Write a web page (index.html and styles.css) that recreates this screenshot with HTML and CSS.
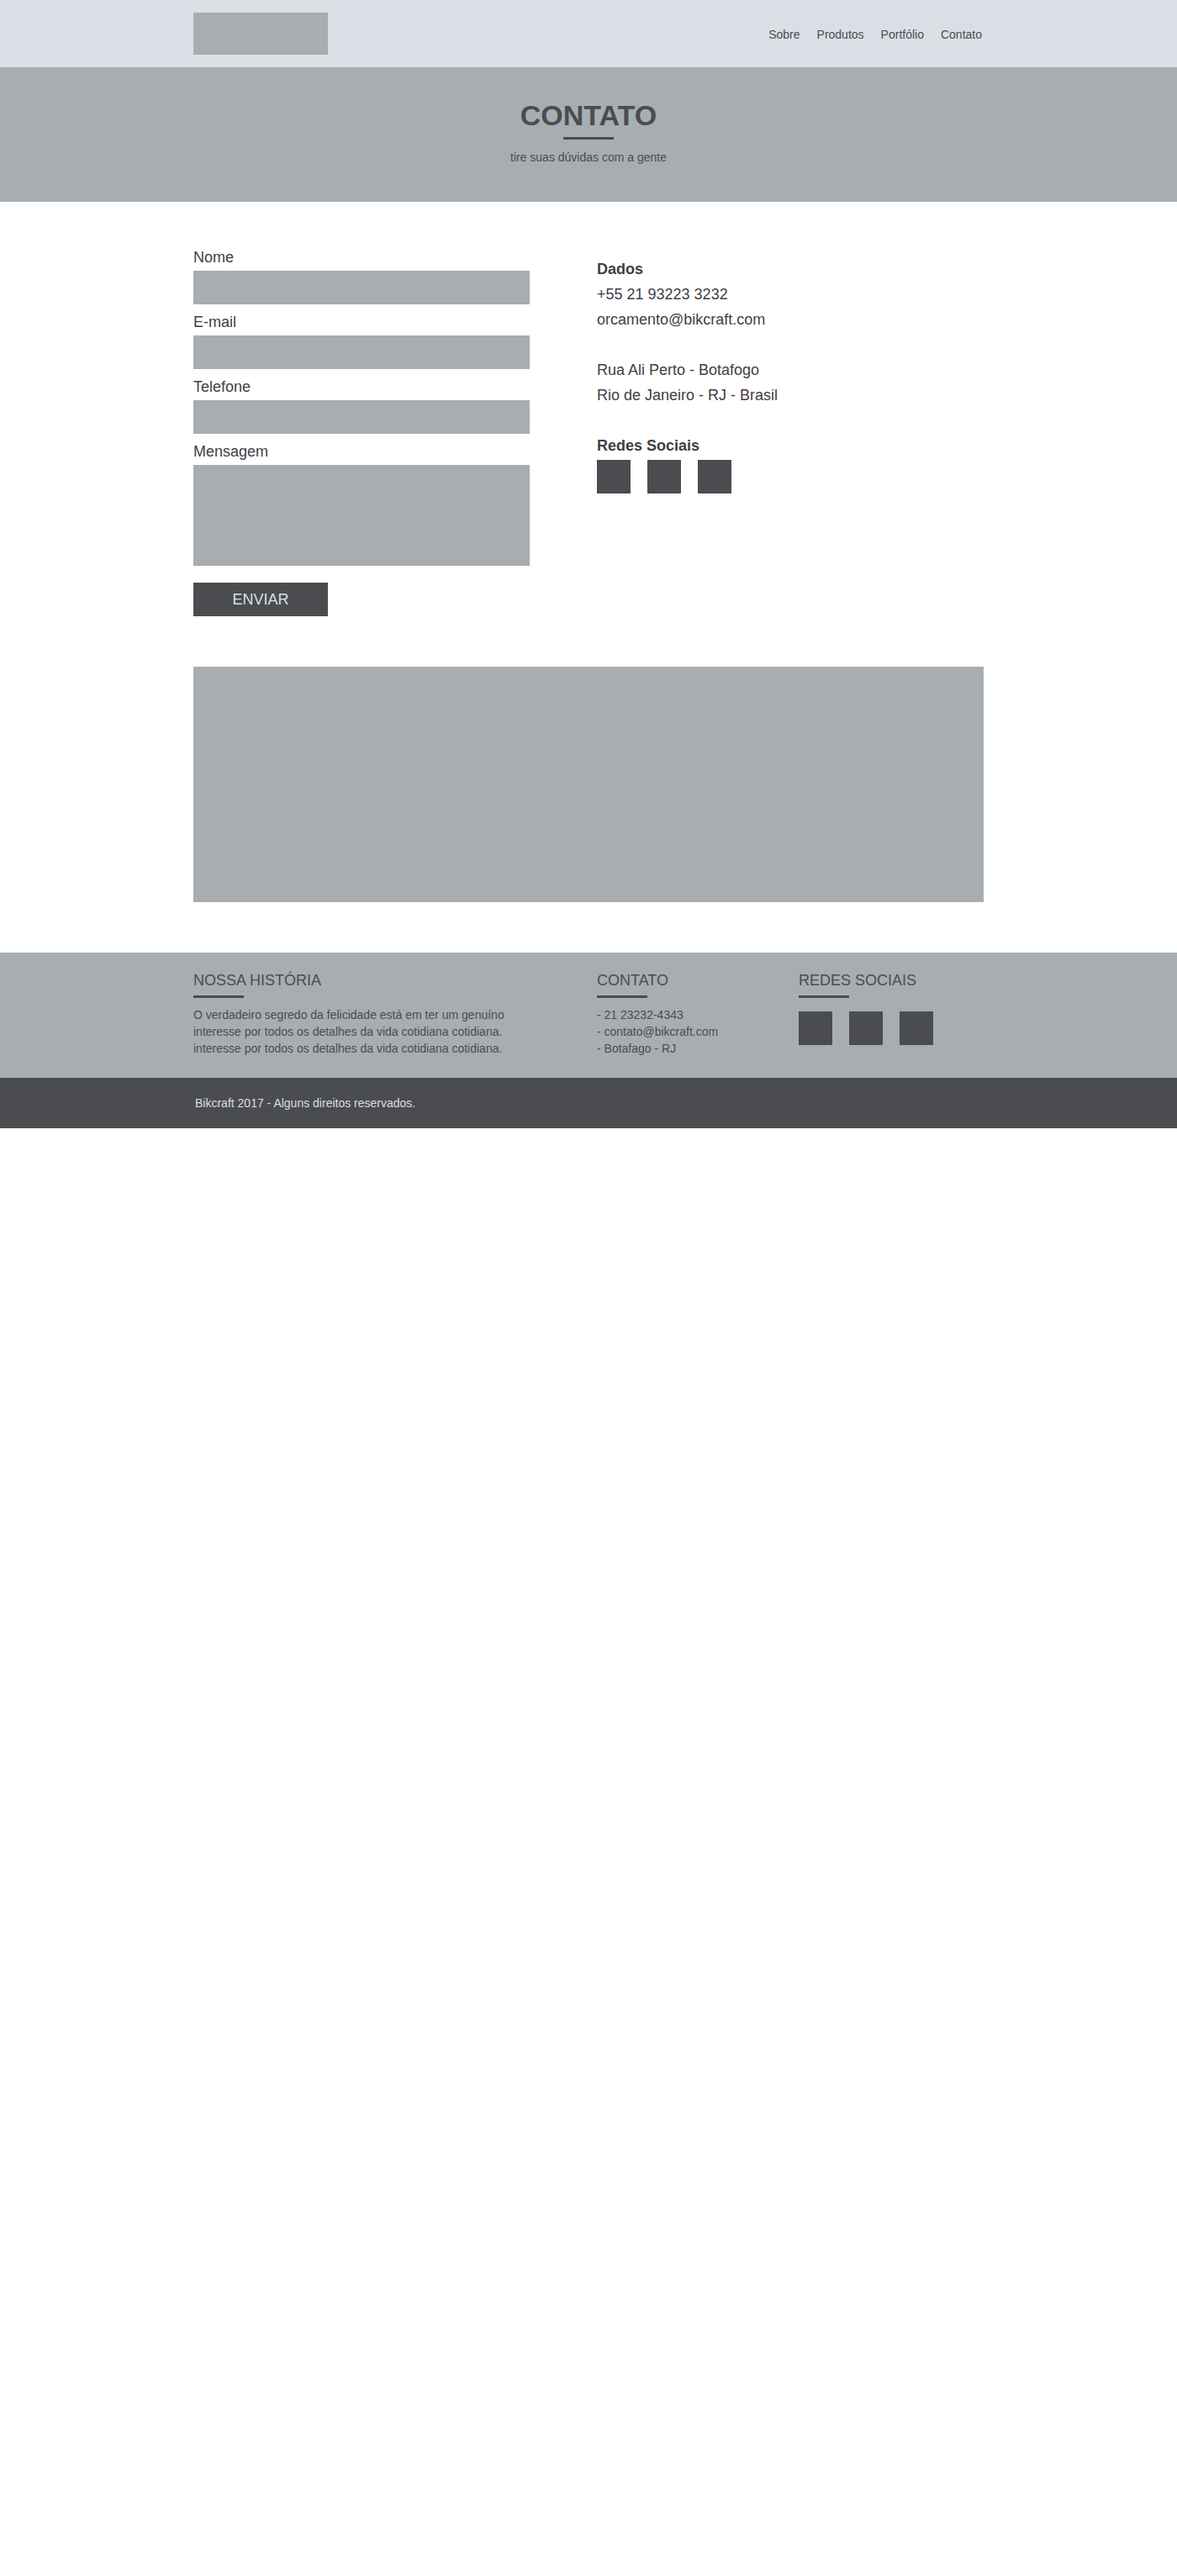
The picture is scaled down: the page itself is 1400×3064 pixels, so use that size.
FILE: index.html
```html
<!DOCTYPE html>
<html lang="pt-BR">
<head>
<meta charset="utf-8">
<title>Contato - Bikcraft</title>
<link rel="stylesheet" href="styles.css">
</head>
<body>
<header class="header">
  <div class="container header-inner">
    <a href="#" class="logo" aria-label="Bikcraft"></a>
    <nav class="nav">
      <a href="#">Sobre</a>
      <a href="#">Produtos</a>
      <a href="#">Portfólio</a>
      <a href="#">Contato</a>
    </nav>
  </div>
</header>

<section class="hero">
  <h1 class="hero-title">CONTATO</h1>
  <span class="hero-rule"></span>
  <p class="hero-sub">tire suas dúvidas com a gente</p>
</section>

<main class="container main">
  <div class="contact">
    <form class="form">
      <label class="label" for="nome">Nome</label>
      <input class="field" id="nome" type="text">
      <label class="label" for="email">E-mail</label>
      <input class="field" id="email" type="email">
      <label class="label" for="tel">Telefone</label>
      <input class="field" id="tel" type="tel">
      <label class="label" for="msg">Mensagem</label>
      <textarea class="field field-area" id="msg"></textarea>
      <button class="btn" type="button">ENVIAR</button>
    </form>
    <div class="info">
      <div class="info-group">
        <h3 class="info-title">Dados</h3>
        <p>+55 21 93223 3232</p>
        <p>orcamento@bikcraft.com</p>
      </div>
      <div class="info-group">
        <p>Rua Ali Perto - Botafogo</p>
        <p>Rio de Janeiro - RJ - Brasil</p>
      </div>
      <div class="info-group">
        <h3 class="info-title">Redes Sociais</h3>
        <div class="socials socials-info">
          <a href="#" class="social"></a>
          <a href="#" class="social"></a>
          <a href="#" class="social"></a>
        </div>
      </div>
    </div>
  </div>
  <div class="map"></div>
</main>

<footer class="footer">
  <div class="container footer-grid">
    <div class="footer-col">
      <h3 class="footer-title">NOSSA HISTÓRIA</h3>
      <span class="footer-rule"></span>
      <p class="footer-text">O verdadeiro segredo da felicidade está em ter um genuíno<br>interesse por todos os detalhes da vida cotidiana cotidiana.<br>interesse por todos os detalhes da vida cotidiana cotidiana.</p>
    </div>
    <div class="footer-col">
      <h3 class="footer-title">CONTATO</h3>
      <span class="footer-rule"></span>
      <ul class="footer-list">
        <li>- 21 23232-4343</li>
        <li>- contato@bikcraft.com</li>
        <li>- Botafago - RJ</li>
      </ul>
    </div>
    <div class="footer-col">
      <h3 class="footer-title">REDES SOCIAIS</h3>
      <span class="footer-rule"></span>
      <div class="socials socials-footer">
        <a href="#" class="social"></a>
        <a href="#" class="social"></a>
        <a href="#" class="social"></a>
      </div>
    </div>
  </div>
</footer>
<div class="copy">
  <div class="container">
    <p class="copy-text">Bikcraft 2017 - Alguns direitos reservados.</p>
  </div>
</div>
</body>
</html>
```

FILE: styles.css
```css
* {
  box-sizing: border-box;
}

html, body {
  margin: 0;
  padding: 0;
  background: #ffffff;
}

body {
  font-family: "Liberation Sans", Arial, Helvetica, sans-serif;
  color: #4b4c50;
  min-height: 3064px;
}

a {
  color: inherit;
  text-decoration: none;
}

.container {
  width: 940px;
  margin: 0 auto;
}

/* Header */
.header {
  background: #d9dfe5;
  height: 80px;
}

.header-inner {
  height: 80px;
  display: flex;
  align-items: center;
  justify-content: space-between;
}

.logo {
  display: block;
  width: 160px;
  height: 50px;
  background: #a8adb1;
}

.nav {
  display: flex;
  gap: 20px;
  font-size: 14px;
  line-height: 20px;
  color: #4b4c50;
  padding-top: 2px;
  margin-right: 2px;
}

/* Hero */
.hero {
  background: #a8adb1;
  height: 160px;
  padding-top: 40px;
  text-align: center;
}

.hero-title {
  margin: 0;
  font-size: 34px;
  line-height: 34px;
  font-weight: bold;
  color: #4b4c50;
}

.hero-rule {
  display: block;
  width: 60px;
  height: 3px;
  margin: 9px auto 0;
  background: #4b4c50;
}

.hero-sub {
  margin: 11px 0 0;
  font-size: 14px;
  line-height: 20px;
  color: #4b4c50;
}

/* Main */
.main {
  padding-top: 55px;
  padding-bottom: 60px;
}

.contact {
  display: grid;
  grid-template-columns: 480px 1fr;
}

.form {
  display: flex;
  flex-direction: column;
  align-items: flex-start;
}

.label {
  display: block;
  font-size: 18px;
  line-height: 22px;
  color: #3f4044;
  margin-bottom: 5px;
}

.field {
  display: block;
  width: 400px;
  height: 40px;
  margin: 0 0 10px;
  border: none;
  background: #a8adb1;
  font: inherit;
  padding: 0 10px;
}

.field-area {
  height: 120px;
  resize: none;
  margin-bottom: 20px;
}

.btn {
  width: 160px;
  height: 40px;
  border: none;
  background: #4b4c50;
  color: #d9dfe5;
  font-family: inherit;
  font-size: 18px;
  cursor: pointer;
  padding: 0;
}

.info {
  padding-top: 10px;
  font-size: 18px;
  line-height: 30px;
  color: #3f4044;
}

.info-group {
  margin-bottom: 30px;
}

.info-group p,
.info-title {
  margin: 0;
  font-size: 18px;
  line-height: 30px;
}

.info-title {
  font-weight: bold;
}

.socials {
  display: flex;
  gap: 20px;
}

.socials-info {
  margin-top: 2px;
}

.social {
  display: block;
  width: 40px;
  height: 40px;
  background: #4b4c50;
}

.map {
  width: 940px;
  height: 280px;
  margin-top: 60px;
  background: #a8adb1;
}

/* Footer */
.footer {
  background: #a8adb1;
  height: 149px;
  padding-top: 22px;
}

.footer-grid {
  display: grid;
  grid-template-columns: 480px 240px 1fr;
}

.footer-title {
  margin: 0;
  font-size: 18px;
  line-height: 22px;
  font-weight: normal;
  color: #4b4c50;
}

.footer-rule {
  display: block;
  width: 60px;
  height: 3px;
  margin-top: 7px;
  background: #4b4c50;
}

.footer-text {
  margin: 10px 0 0;
  font-size: 14px;
  line-height: 20px;
  color: #4b4c50;
}

.footer-list {
  list-style: none;
  margin: 10px 0 0;
  padding: 0;
  font-size: 14px;
  line-height: 20px;
  color: #4b4c50;
}

.socials-footer {
  margin-top: 16px;
}

.copy {
  background: #4b4c50;
  height: 60px;
}

.copy-text {
  margin: 0;
  font-size: 14px;
  line-height: 60px;
  color: #d9dfe5;
  padding-left: 2px;
}
```
